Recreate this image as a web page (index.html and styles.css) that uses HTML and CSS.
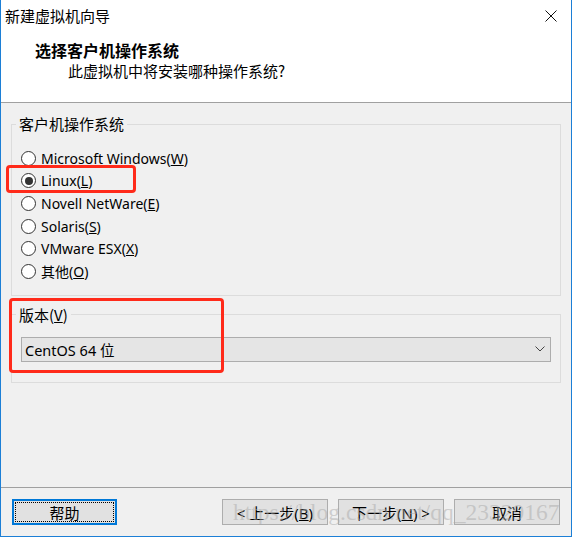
FILE: index.html
```html
<!DOCTYPE html>
<html lang="zh-CN">

<head>
    <meta charset="UTF-8">
    <title>新建虚拟机向导</title>
    <link rel="stylesheet" href="styles.css">
</head>

<body>
    <div class="window">
        <div class="titlebar">
            <span class="title">新建虚拟机向导</span>
            <svg class="close-icon" width="12" height="12" viewBox="0 0 12 12">
                <path d="M0.5 0.5 L11.5 11.5 M11.5 0.5 L0.5 11.5" stroke="#111" stroke-width="1" fill="none"/>
            </svg>
        </div>
        <div class="header">
            <div class="header-title">选择客户机操作系统</div>
            <div class="header-sub">此虚拟机中将安装哪种操作系统?</div>
        </div>
        <div class="content">
            <fieldset class="group os-group">
                <legend>客户机操作系统</legend>
                <div class="radio-list">
                    <div class="radio-row"><span class="radio"></span><span>Microsoft Windows(<u>W</u>)</span></div>
                    <div class="radio-row"><span class="radio checked"></span><span>Linux(<u>L</u>)</span></div>
                    <div class="radio-row"><span class="radio"></span><span>Novell NetWare(<u>E</u>)</span></div>
                    <div class="radio-row"><span class="radio"></span><span>Solaris(<u>S</u>)</span></div>
                    <div class="radio-row"><span class="radio"></span><span>VMware ESX(<u>X</u>)</span></div>
                    <div class="radio-row"><span class="radio"></span><span>其他(<u>O</u>)</span></div>
                </div>
            </fieldset>
            <fieldset class="group version-group">
                <legend>版本(<u>V</u>)</legend>
                <div class="combo-wrap">
                    <div class="combo">
                        <span>CentOS 64 位</span>
                        <svg class="chevron" width="10" height="6" viewBox="0 0 10 6">
                            <path d="M0.5 0.5 L5 5 L9.5 0.5" stroke="#444" stroke-width="1" fill="none"/>
                        </svg>
                    </div>
                </div>
            </fieldset>
            <div class="mark mark-linux"></div>
            <div class="mark mark-version"></div>
        </div>
        <div class="footer">
            <button class="btn btn-focus"><span>帮助</span></button>
            <div class="nav-buttons">
                <button class="btn"><span>&lt; 上一步(<u>B</u>)</span></button>
                <button class="btn"><span>下一步(<u>N</u>) &gt;</span></button>
                <button class="btn"><span>取消</span></button>
            </div>
            <div class="watermark">https://blog.csdn.net/qq_23329167</div>
        </div>
    </div>
</body>

</html>
```

FILE: styles.css
```css
body {
    margin: 0;
    background: #ffffff;
    font-family: 'Noto Sans', 'Noto Sans CJK SC', sans-serif;
    font-size: 14px;
    color: #000;
}

.window {
    width: 572px;
    height: 537px;
    box-sizing: border-box;
    border: 1px solid #1c7fd6;
    border-top: none;
    background: #f0f0f0;
    display: flex;
    flex-direction: column;
    position: relative;
}

.titlebar {
    height: 31px;
    background: #fff;
    display: flex;
    align-items: center;
    justify-content: space-between;
    padding: 0 14px 0 4px;
    font-family: 'Noto Sans CJK SC', sans-serif;
    font-size: 15px;
}

.close-icon {
    display: block;
}

.header {
    height: 72px;
    background: #fff;
    padding: 9px 0 0 34px;
    box-sizing: border-box;
    border-bottom: 1px solid #a0a0a0;
    font-family: 'Noto Sans CJK SC', sans-serif;
    font-size: 15px;
    line-height: 20px;
}

.header-title {
    font-weight: 700;
    font-size: 16px;
}

.header-sub {
    margin-top: 1px;
    padding-left: 33px;
}

.content {
    height: 384px;
    position: relative;
    padding: 11px 10px 0 10px;
    box-sizing: border-box;
}

.group {
    margin: 0;
    padding: 0;
    border: 1px solid #dcdcdc;
    min-width: 0;
}

.group legend {
    margin-left: 4px;
    padding: 0 3px;
    font-family: 'Noto Sans CJK SC', sans-serif;
    font-size: 15px;
    line-height: 20px;
}

.radio-list {
    padding: 13px 0 12px 9px;
    font-size: 14px;
}

.radio-row {
    height: 22.6px;
    display: flex;
    align-items: center;
    gap: 5px;
    white-space: nowrap;
}

.radio {
    width: 15px;
    height: 15px;
    box-sizing: border-box;
    border: 1px solid #333;
    border-radius: 50%;
    background: #fff;
    display: flex;
    align-items: center;
    justify-content: center;
}

.radio.checked::after {
    content: "";
    width: 8px;
    height: 8px;
    border-radius: 50%;
    background: #333;
}

.version-group {
    margin-top: 9px;
}

.combo-wrap {
    padding: 12px 9px 20px 9px;
}

.combo {
    height: 25px;
    box-sizing: border-box;
    border: 1px solid #adadad;
    background: #e5e5e5;
    display: flex;
    align-items: center;
    justify-content: space-between;
    padding: 0 5px 0 3px;
    font-size: 14.5px;
}

.chevron {
    display: block;
}

.mark {
    position: absolute;
    border: 3px solid #ff2a1a;
    border-radius: 4px;
    box-sizing: border-box;
}

.mark-linux {
    left: 5px;
    top: 62px;
    width: 130px;
    height: 28px;
}

.mark-version {
    left: 8px;
    top: 195px;
    width: 215px;
    height: 75px;
}

.footer {
    flex: 1;
    border-top: 1px solid #a0a0a0;
    display: flex;
    justify-content: space-between;
    align-items: flex-start;
    padding: 11px 11px 0 11px;
    position: relative;
}

.btn {
    width: 106px;
    height: 26px;
    box-sizing: border-box;
    border: 1px solid #adadad;
    background: #e1e1e1;
    padding: 0;
    font-family: 'Noto Sans', 'Noto Sans CJK SC', sans-serif;
    font-size: 15px;
    color: #000;
    display: flex;
    align-items: center;
    justify-content: center;
}

.btn-focus {
    width: 105px;
    border: 2px solid #0078d7;
    padding: 1px;
}

.btn-focus span {
    width: 100%;
    height: 100%;
    box-sizing: border-box;
    border: 1px dotted #000;
    display: flex;
    align-items: center;
    justify-content: center;
}

.nav-buttons {
    display: flex;
    gap: 10px;
}

.watermark {
    position: absolute;
    left: 232px;
    top: 12px;
    font-family: 'Liberation Serif', serif;
    font-size: 23.5px;
    line-height: 24px;
    color: rgba(170, 170, 170, 0.5);
    white-space: nowrap;
    pointer-events: none;
}
```
